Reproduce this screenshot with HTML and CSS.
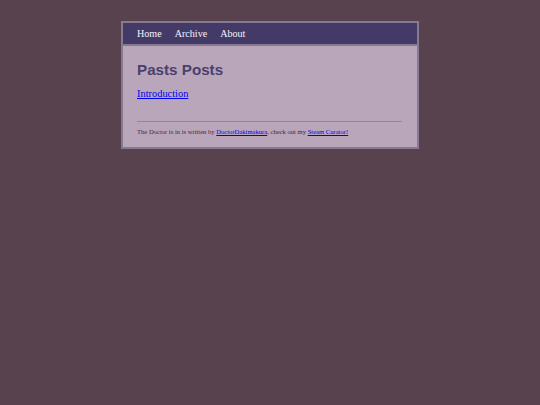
FILE: index.html
```html
<!DOCTYPE html>
<html lang="en">
<head>
<meta charset="utf-8">
<title>Pasts Posts</title>
<link rel="stylesheet" href="styles.css">
</head>
<body>
<div class="wrap">
  <nav class="nav">
    <a href="#">Home</a>
    <a href="#">Archive</a>
    <a href="#">About</a>
  </nav>
  <main class="content">
    <h1 class="title">Pasts Posts</h1>
    <p class="post"><a href="#">Introduction</a></p>
    <footer class="foot">The Doctor is in is written by <a href="#">DoctorDakimakura</a>, check out my <a href="#">Steam Curator!</a></footer>
  </main>
</div>
</body>
</html>
```
FILE: styles.css
```css
html, body { margin: 0; padding: 0; }
body {
  background: #58424e;
  font-family: "Liberation Serif", serif;
  height: 405px;
  overflow: hidden;
}
.wrap {
  box-sizing: border-box;
  width: 298px;
  margin: 21px 0 0 121px;
  border: 2px solid #857a92;
  background: #b9a6bb;
}
.nav {
  display: flex;
  gap: 13px;
  background: #443a68;
  height: 21px;
  border-bottom: 2px solid #857a92;
  padding-left: 14px;
  align-items: center;
  font-size: 10.1px;
  line-height: 19px;
}
.nav a { color: #f6f2f6; text-decoration: none; }
.content { padding: 13px 15px 11px 14px; }
.title {
  margin: 0;
  font: bold 15.2px/21px "Liberation Sans", sans-serif;
  color: #4a3f6e;
}
.post {
  margin: 7px 0 0;
  font-size: 10.4px;
  line-height: 14px;
}
a { color: #0000ee; }
.foot {
  margin-top: 20px;
  border-top: 1px solid #95849a;
  padding-top: 5px;
  font-size: 6.6px;
  line-height: 9px;
  color: #3a2a3a;
}
```
